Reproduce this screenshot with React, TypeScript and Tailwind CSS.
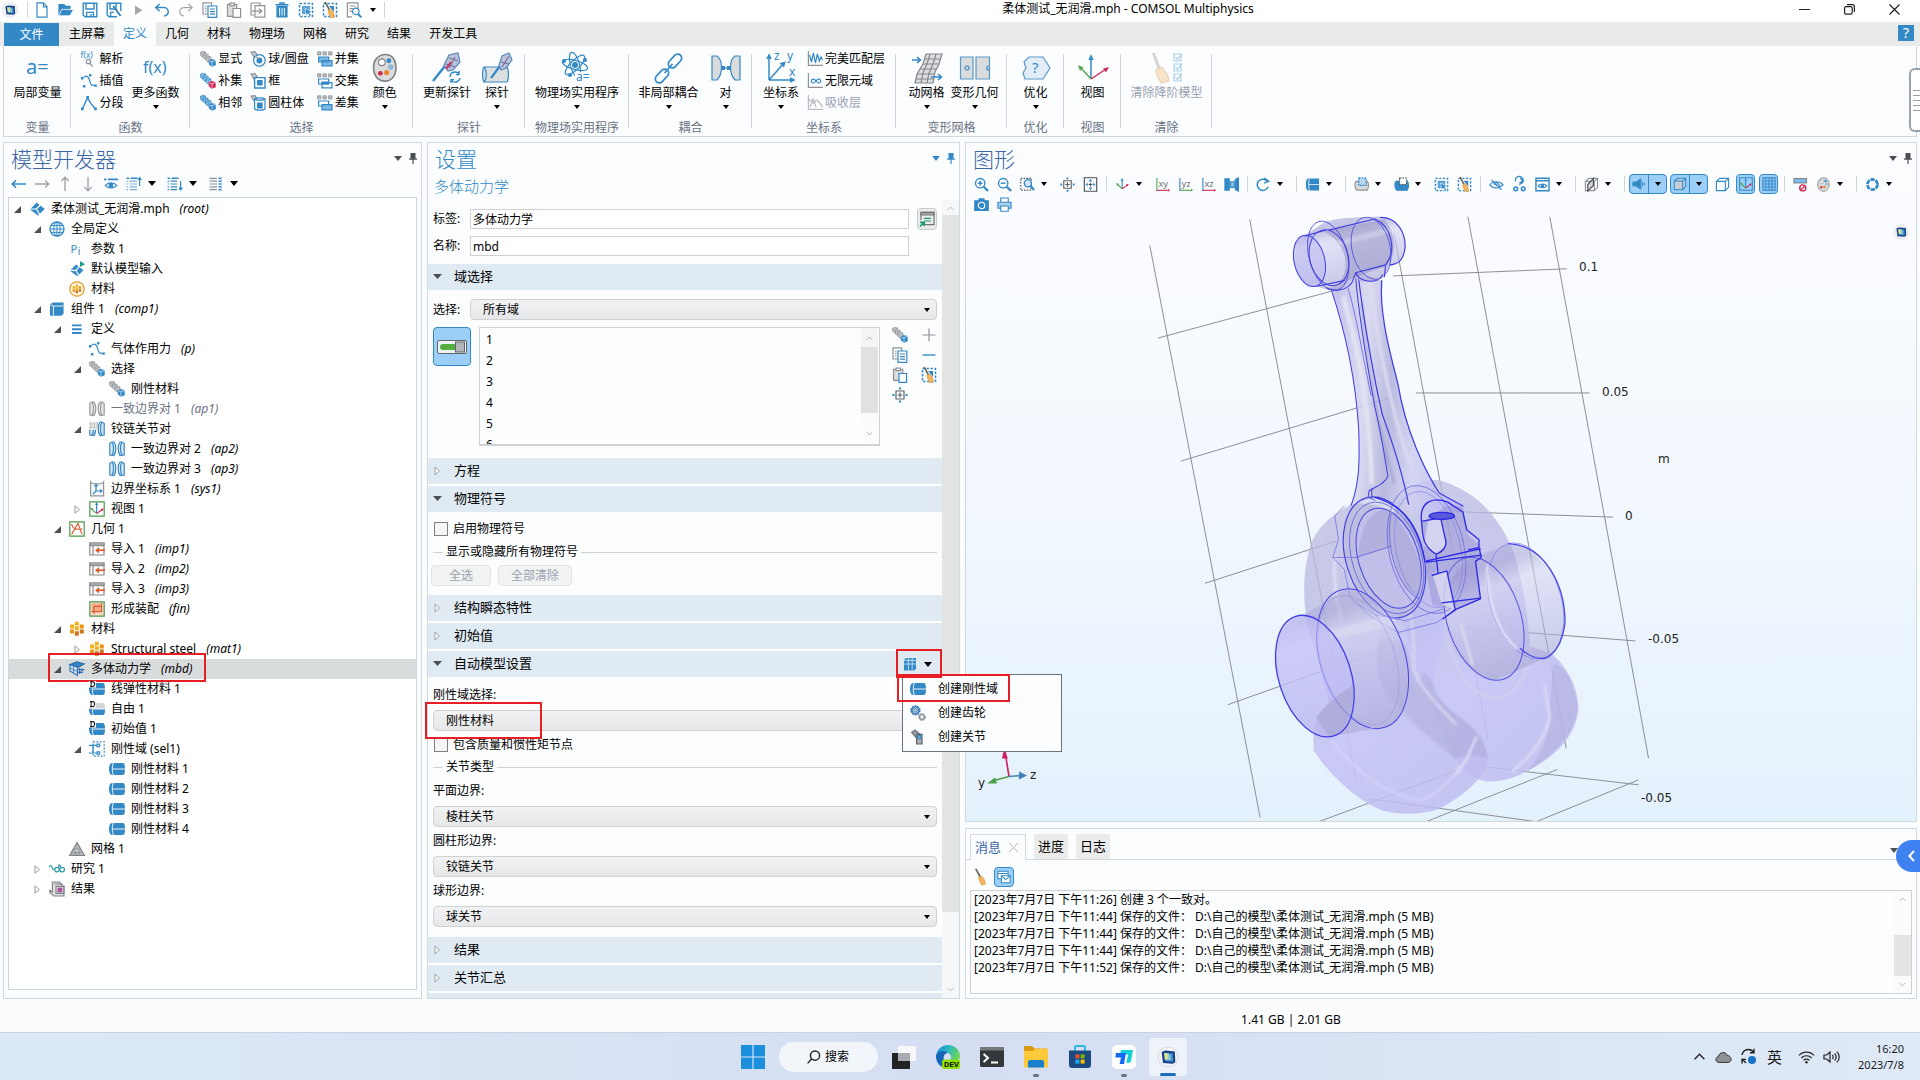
import React from "react";

const B = "#3389c6";
const G = "#8f9396";
const D = "#4b4f52";

function Svg({ s = 16, v = 16, children }: { s?: number; v?: number; children: React.ReactNode }) {
  return (
    <svg width={s} height={s} viewBox={`0 0 ${v} ${v}`} fill="none" stroke={B} strokeWidth="1.2" className="block shrink-0 overflow-visible" aria-hidden="true">
      {children}
    </svg>
  );
}

function Broom({ x = 0, y = 0, k = 1 }: { x?: number; y?: number; k?: number }) {
  return (
    <g transform={`translate(${x} ${y}) scale(${k})`} stroke="none">
      <path d="M1 0 L2.6 -0.4 L7 7.5 L5.4 8.4 Z" fill="#6d665c" />
      <path d="M4.6 8.6 L7.6 7 C10 9 11.4 12 11.4 15.6 L7.4 16 C6.4 13.6 5 12 4.6 8.6 Z" fill="#f3b45e" stroke="#d08f35" strokeWidth=".5" />
    </g>
  );
}

function Cubes({ last = B, all = "#c9cccf", edge = G }: { last?: string; all?: string; edge?: string }) {
  const cube = (x: number, y: number, f: string, e: string, k: number) => (
    <g transform={`translate(${x} ${y}) scale(${k})`}>
      <path d="M0 1.4 L2 0 L6 .6 L6.4 5.4 L3 6.6 L0.4 5 Z" fill={f} stroke={e} strokeWidth=".9" />
      <path d="M0 1.4 L3 2.2 L6 .6 M3 2.2 V6.6" stroke={e} strokeWidth=".7" />
    </g>
  );
  return (
    <>
      {cube(0.4, 0.4, all, edge, 0.85)}
      {cube(3, 2.8, all, edge, 0.85)}
      {cube(5.8, 5.4, all, edge, 0.85)}
      {cube(9, 8.6, last, last, 1)}
      <path d="M9.4 10.2 L12 10.8 L15 9.4 M12 10.8 V15" stroke="#fff" strokeWidth=".6" />
    </>
  );
}

const Cyl = ({ top = B }: { top?: string }) => (
  <g stroke="none">
    <path d="M3 2 H14 C15.5 2 16 5 16 8 C16 11 15.5 14 14 14 H3 C1 14 0 11 0 8 C0 5 1 2 3 2 Z" fill={top} />
    {top !== B && <path d="M0 8 H16 C16 11 15.5 14 14 14 H3 C1 14 0 11 0 8 Z" fill={B} />}
    <path d="M4.5 2 C2.9 4 2.9 12 4.5 14 M4 8 H16" stroke="#fff" strokeWidth=".9" fill="none" />
  </g>
);

const Dtag = ({ top = B }: { top?: string }) => (
  <>
    <Cyl top={top} />
    <path d="M0 0 H7 V6.6 H0 Z" fill="#fff" stroke="none" />
    <path d="M1 .6 H3.4 C6.4 .6 6.4 5.6 3.4 5.6 H1 M2.1 .6 V5.6" stroke="#222" strokeWidth="1.1" />
  </>
);

const Pair = ({ c = B, f = "#dfe7ee" }: { c?: string; f?: string }) => (
  <>
    <path d="M.8 2.5 L3 1 H5 C7.4 4 7.4 11 5 14.5 L.8 14 Z" fill={f} stroke={c} />
    <path d="M15.2 2.5 L13 1 H11 C8.6 4 8.6 11 11 14.5 L15.2 14 Z" fill={f} stroke={c} />
    <path d="M3 1 C5 4 5 11 3 14.5 M13 1 C11 4 11 11 13 14.5" stroke={c} />
  </>
);

const Bricks = ({ ring = false }: { ring?: boolean }) => (
  <g stroke="none" transform={ring ? "translate(3 3) scale(.62)" : undefined}>
    <path d="M5.8 .8 h4 v3.6 h-4z M1 3.6 h4v4h-4z M5.8 5.2h4v4h-4z" fill="#f3b21f" />
    <path d="M10.8 3.6h4v4h-4z M1 8.6h4v4h-4z" fill="#e8951a" />
    <path d="M10.8 8.6h4v4h-4z M5.8 10.2h4v4.6h-4z" fill="#c9771a" />
  </g>
);

const Import = () => (
  <>
    <path d="M.8 2 H15 V14 H.8 Z M.8 4.6 H15 M4 4.6 V14" stroke="#8a8a8a" />
    <path d="M0.8 2H15V4.2H.8Z" fill="#c4c6c8" stroke="#8a8a8a" />
    <path d="M16 9.2 H8" stroke="#d95f30" strokeWidth="1.8" />
    <path d="M10 6 L6 9.2 L10 12.6 Z" fill="#d95f30" stroke="none" />
  </>
);

const Diamond = () => (
  <>
    <path d="M7.6 1.6 L15.8 8 L9 14.4 L1 8.4 Z" fill={B} stroke="none" />
    <path d="M.5 8 L7.4 8 L11.2 4 M7.4 8 L10.6 13.4" stroke="#fff" strokeWidth="1.2" />
  </>
);

const Paste = () => (
  <>
    <path d="M1.5 2.4 H10.8 V13.4 H1.5Z" fill="#dcdedf" stroke={G} />
    <path d="M4 3.6 V1.2 H8.4 V3.6Z" fill="#fff" stroke={G} />
    <path d="M7 6.5 H14.6 V15.3 H7Z" fill="#fff" />
  </>
);

const Copy = () => (
  <>
    <path d="M1 .8 H9.6 V12 H1Z M3 4h1.5 M3 6.4h1.5 M3 8.8h1.5" stroke={G} />
    <path d="M6 4 H14.8 V15.3 H6Z" fill="#fff" />
    <path d="M8 7h5M8 9.6h5M8 12.2h5" />
  </>
);

const ClearSel = () => (
  <>
    <path d="M1.5 1.5H14.5V14.5H1.5Z" strokeDasharray="2.4 1.6" strokeWidth="1.5" />
    <path d="M7 4H12V10Z" fill={B} stroke="none" />
    <Broom x={1.4} y={0.2} k={0.97} />
  </>
);

const SelBox = () => (
  <>
    <path d="M1.5 1.5H14.5V14.5H1.5Z" strokeDasharray="2.4 1.6" strokeWidth="1.5" />
    <path d="M4 4H12V12H4Z" fill="#5aa3d6" stroke="none" />
    <path d="M7 6.4 L14 9.6 L11.4 10.6 L13.6 14 L12 15 L10 11.6 L8.2 13.4 Z" fill={B} stroke="#fff" strokeWidth=".6" />
  </>
);

const Palette = () => (
  <>
    <path d="M8.8 .8 C4 .6 1.4 4.6 2 9 C2.4 13 5 15.4 8.6 15.2 C12.4 15 14.4 11 14 7 C13.6 3 11.6 1 8.8 .8 Z" fill="#dcdcdc" stroke="#808488" strokeWidth=".9" />
    <g stroke="none">
      <circle cx="6.4" cy="5" r="1.8" fill="#fff" stroke="#808488" strokeWidth=".6" />
      <circle cx="10.2" cy="4.2" r="1.3" fill={B} />
      <circle cx="11.2" cy="7.6" r="1.5" fill="#8fb7d8" />
      <circle cx="9" cy="10.6" r="1.4" fill="#e8862e" />
      <circle cx="5.6" cy="11" r="1.3" fill="#d0314a" />
    </g>
  </>
);

const Triad = ({ frame = "" }: { frame?: string }) => (
  <>
    {frame && <path d="M.8 .8H15.2V15.2H.8Z" stroke={frame} fill={frame === B ? "none" : "#fff"} />}
    <path d="M7.6 12.6V2.6" stroke={B} />
    <path d="M7.6 12.6L2.4 7.6" stroke="#56a550" />
    <path d="M7.6 12.6L13.4 8.4" stroke="#cf2d5c" />
    <path d="M7.6 1L9.2 4H6Z" fill={B} stroke="none" />
    <path d="M1.2 6.4L4.4 7.4L2.4 9.6Z" fill="#56a550" stroke="none" />
    <path d="M14.8 7.2L13.4 10.2L11.6 8Z" fill="#cf2d5c" stroke="none" />
  </>
);

const Mag = ({ children }: { children?: React.ReactNode }) => (
  <>
    <circle cx="6.6" cy="6.6" r="5" strokeWidth="1.5" />
    <path d="M10.4 10.4L15 15" strokeWidth="2.4" />
    {children}
  </>
);

const WideBox = ({ fill = "none" }: { fill?: string }) => (
  <path d="M1.5 4.6L5 1.5H14.5V11L11 14.5H1.5Z M1.5 4.6H11V14.5 M11 4.6L14.5 1.5" fill={fill} />
);

const AxesText = ({ t, a, b }: { t: string; a: string; b: string }) => (
  <>
    <path d="M2 1V14.6" stroke={a} />
    <path d="M1.5 14.2H15" stroke={b} />
    <path d="M14 12.6L16 14.2L14 15.8Z" fill={b} stroke="none" />
    <text x="3.6" y="10.6" fontSize="10" fill="#707478" stroke="none" fontFamily="Noto Sans">{t}</text>
  </>
);

const Comsol = () => (
  <>
    <ellipse cx="8" cy="8" rx="7.2" ry="7.2" fill="#f2f3f6" stroke="#d5d8de" strokeWidth=".7" />
    <path d="M3.4 4.4 L6 3.4 L12.8 4 L13.2 11.6 L11.6 12.8 L4.4 12.2 Z" fill="#173f86" stroke="none" />
    <path d="M5 5 L11.4 5.4 L11.8 11.4 L5.8 11 Z" fill="#3d8fd6" stroke="none" />
    <path d="M5.2 5.2 L8.6 5.4 L8.8 9.8 L5.8 10 Z" fill="#e6e68a" stroke="none" />
    <path d="M7.4 6.4 L9.8 6.6 L10 10.2 L7.8 10 Z" fill="#8ec9c9" stroke="none" />
  </>
);

const ic: Record<string, React.ReactNode> = {
  comsol: <Comsol />,
  newf: <path d="M3 .8H9.6L13 4.4V15.2H3Z M9.4 1V4.8H13" />,
  open: <><path d="M1 13.6V2.6H6L7.6 4.4H12V7" fill={B} /><path d="M3.6 7.4H15.6L12 13.8H.8Z" fill={B} stroke="#fff" strokeWidth=".8" /></>,
  save: <path d="M1.2 1.2H14.8V14.8H3L1.2 13Z M4 1.2V7H12V1.2 M4.6 14.6V10.4H11.4V14.6 M9 12v2" strokeWidth="1.4" />,
  saveas: <><path d="M11 14.8H3L1.2 13V1.2H14.8V9 M4 1.2V7H10V1.2 M4.6 14.6V10.4H8" strokeWidth="1.4" /><path d="M6.4 4.6L13.8 14.6L15.4 13.4L8.2 3.6Z" fill={B} stroke="none" /></>,
  play: <path d="M5 3.6L12.4 8.2L5 13Z" fill="#a4a8aa" stroke="none" />,
  undo: <><path d="M2.6 5.6H10C13 5.6 14.6 8 14.2 10.4C13.8 12.6 12.4 13.8 10 14" strokeWidth="1.5" /><path d="M5.6 2L1.8 5.6L5.6 9.2" strokeWidth="1.5" /></>,
  redo: <g stroke="#a4a8aa"><path d="M13.4 5.6H6C3 5.6 1.4 8 1.8 10.4C2.2 12.6 3.6 13.8 6 14" /><path d="M10.4 2L14.2 5.6L10.4 9.2" /></g>,
  copy: <Copy />,
  paste: <Paste />,
  pasteG: <><path d="M1.5 2.4 H10.8 V14.4 H1.5Z" fill="#dcdedf" stroke={G} /><path d="M4 3.6 V1.2 H8.4 V3.6Z M7 6.5 H14.6 V15.3 H7Z" fill="#fff" stroke={G} /></>,
  dup: <g stroke={G}><path d="M1 1H10V4 M1 1V13H4" /><path d="M5 3.6H14.8V15.2H5Z" fill="#fff" /><path d="M1.6 9.2H11.6M9 6.8L11.8 9.2L9 11.8" /></g>,
  trash: <><path d="M3 4.4H13V15H3Z" fill={B} /><path d="M5.6 6V13.6M8 6V13.6M10.4 6V13.6" stroke="#fff" strokeWidth=".9" /><path d="M1.6 2.8H14.4M6 2.6V1H10V2.6" strokeWidth="1.5" /></>,
  selbox: <SelBox />,
  clearsel: <ClearSel />,
  find: <><path d="M12 6V.8H1.4V14.8H6M3.6 4h6M3.6 6.6h4M3.6 9.2h2.6" stroke={G} /><circle cx="9.8" cy="9.4" r="3.2" /><path d="M12 12L15.4 15.4" strokeWidth="2" /></>,
  // ribbon small
  analytic: <><text x="-.5" y="7" fontSize="8.4" fill={B} stroke="none" fontFamily="Noto Sans">f(x)</text><circle cx="7.4" cy="10.6" r="2.2" stroke={G} /><path d="M9 12.4L11.6 15.6" stroke={G} /></>,
  interp: <><path d="M2.4 4.6C6 1 8 4.6 9 8.6C9.8 12 11 13 14 12" /><path d="M0 4h2.4v2.4H0zM8 1h2.4v2.4H8zM2 12h2.4v2.4H2zM13.4 11.4h2.4v2.4h-2.4z" fill={B} stroke="none" /></>,
  piecewise: <><path d="M1.4 14L6.4 3L10 8.6L14.4 14" strokeWidth="1.4" /><path d="M0 12.6h2.6v2.6H0zM5.4 1h2.6v2.6H5.4zM13.2 12.6h2.6v2.6h-2.6z" fill={B} stroke="none" /></>,
  cubes: <Cubes />,
  cubesRed: <Cubes all="#9fcbea" edge={B} last="#d02a55" />,
  cubesBlue: <Cubes all="#8fc2e6" edge={B} />,
  ball: <><path d="M1 1L5 .6L8 5L4 6Z" fill="#c9cccf" stroke={G} /><circle cx="9.4" cy="9.4" r="5.8" fill="#fff" /><circle cx="9.4" cy="9.4" r="2.4" fill={B} /><path d="M5.4 5.4L9 8" stroke={G} /></>,
  frame: <><path d="M1 1L5 .6L8 5L4 6Z" fill="#c9cccf" stroke={G} /><path d="M4.6 4.6H15V15H4.6Z" fill="#fff" strokeWidth="1.4" /><path d="M7.6 7.6H12V12H7.6Z" fill={B} /></>,
  cyls: <><path d="M1 1L5 .6L8 5L4 6Z" fill="#c9cccf" stroke={G} /><path d="M4.6 4C6 2.6 13.6 2.6 15 4V14C13.6 15.6 6 15.6 4.6 14Z" fill="#fff" /><path d="M4.6 4C6 5.6 13.6 5.6 15 4" /><path d="M7.6 8H12V13H7.6Z" fill={B} /></>,
  union: <><path d="M.5 .8H4V4H.5ZM6 .8H9.5V4H6ZM11.5 .8H15V4H11.5Z" fill="#b7babd" stroke={G} strokeWidth=".7" /><path d="M1.6 6H11.6V11H1.6Z M5 9.6H15V14.8H5Z" fill="#7db9e4" /></>,
  inter: <><path d="M.5 .8H4V4H.5ZM6 .8H9.5V4H6ZM11.5 .8H15V4H11.5Z" fill="#b7babd" stroke={G} strokeWidth=".7" /><path d="M1.6 6H11.6V11H1.6Z M5 9.6H15V14.8H5Z" fill="#fff" /><path d="M5 9.2H11.6V11H5Z" fill={B} /></>,
  diff: <><path d="M.5 .8H4V4H.5ZM6 .8H9.5V4H6ZM11.5 .8H15V4H11.5Z" fill="#b7babd" stroke={G} strokeWidth=".7" /><path d="M1.6 6H11.6V11H1.6Z" fill="#fff" /><path d="M5 9.6H15V14.8H5Z" fill="#7db9e4" /></>,
  pml: <><path d="M1.4 0V14.4H16" stroke={G} /><path d="M2.6 4L4.4 11L6.4 2L8.4 12L10.4 3L12.4 10L14 6L15.6 9" /></>,
  inf: <><path d="M1.4 0V14.4H16" stroke={G} /><path d="M4.4 8C4.4 5.4 7.4 5.8 9 8C10.6 10.2 13.6 10.6 13.6 8C13.6 5.4 10.6 5.8 9 8C7.4 10.2 4.4 10.6 4.4 8Z" /></>,
  absorb: <g stroke="#b8bbbd"><path d="M1.4 0V14.4H16M2 6C4 1 6 12 8 7S12 8 15.6 12M3 12L6 4L9 12" /></g>,
  // tree
  diamond: <Diamond />,
  globe: <g stroke={B} strokeWidth="1"><circle cx="8" cy="8" r="7" strokeWidth="1.3" /><ellipse cx="8" cy="8" rx="3.2" ry="7" /><path d="M8 1V15M1 8H15M2 4.6H14M2 11.4H14" /></g>,
  pi: <text x="1.6" y="12" fontSize="11" fill={B} stroke="none" fontFamily="Noto Sans">P<tspan dx=".6" dy="1.6" fontSize="10">i</tspan></text>,
  modelin: <><g transform="translate(0 2) scale(.92)"><Diamond /></g><path d="M11 0L16 3.2L11 6Z" fill="#1d9a8a" stroke="none" /></>,
  matring: <><circle cx="8" cy="8" r="7.2" stroke="#e8951a" fill="#fff8ea" /><Bricks ring /></>,
  comp: <><path d="M1 3.6L4 1.4H14.6V12.6L12.4 14.8H1Z" fill={B} stroke="none" /><path d="M1.2 3.8L4.4 5H14.4 M4.4 5V14.6" stroke="#fff" strokeWidth=".9" /></>,
  defs: <path d="M3 4.4H12.6M3 8.2H12.6M3 12H12.6" strokeWidth="1.9" />,
  pairG: <Pair c="#9a9a9a" f="#e8e8e8" />,
  pair: <Pair />,
  pairs: <><Pair /><path d="M0 0H9V8.6H0Z" fill="#fff" stroke="none" /><path d="M2 1v7M5 1v7M8 1v7M0 3H9M0 6H9" stroke={G} strokeWidth=".9" strokeDasharray="1.6 1" /></>,
  sys: <><path d="M1.6 1C3 3.4 13 3.4 14.6 1V14.8H1.6Z" stroke={G} fill="#f6f8fa" /><path d="M7 3.6V10M7 10H12.6M7 10L4 13M11 8.4L13 10L11 11.6M5.4 5.4L7 3.4L8.6 5.4" /></>,
  view: <Triad frame="#4b9b4b" />,
  geom: <><path d="M.8 .8H15.2V15.2H.8Z" stroke="#4b9b4b" fill="#fff" /><path d="M2.6 13.4L9 2.4L13 13.4M2.6 3C4 10 10 8 13.4 8" stroke="#e0603a" /></>,
  imp: <Import />,
  fin: <><path d="M.8 .8H15.2V15.2H.8Z" stroke="#4b9b4b" fill="#f7d9c8" /><path d="M2.6 2.6H12.6V10.6H2.6Z" fill="#f2a98c" stroke="none" /><path d="M5 5.4H12.6V2 M2.6 10.6H12.6V5.4 M5 5.4V13" stroke="#d95f30" /></>,
  bricks: <Bricks />,
  mbd: <><path d="M1 3.6L8 .8L15 3L9.6 6Z" fill={B} stroke="#2b6aa6" /><path d="M1 3.6V10L8.4 14.4V6.2Z" fill="#d7e4f2" stroke="#3a74b4" /><path d="M9 8.6H15.6M9 11.4H14M10.6 7V13M13 7.6V10.6" stroke="#3a74b4" strokeWidth="1.3" /><path d="M4.6 5V12.4M1 7L8.4 10.4" stroke="#3a74b4" strokeWidth=".8" /></>,
  dom: <Dtag />,
  free: <Dtag top="#d3d6d8" />,
  selgrp: <><path d="M4 .8H15.2V15.2H4Z" strokeDasharray="1.8 1.6" /><path d="M0 4.4H8M4 4.4V12H8M0 12H4" /><path d="M8 3.2h2.6v2.4H8zM8 10.8h2.6v2.4H8z" fill="#fff" /></>,
  cyl: <Cyl />,
  mesh: <><path d="M8 1.6L15.4 14.4H.6Z" fill="#c6c8ca" stroke="#808486" /><path d="M4.4 8H11.6L8 14.4Z M8 1.6V8M2.6 11.4H13.4M6 11.4L4.4 14.4M10 11.4L11.6 14.4" stroke="#808486" strokeWidth=".7" /></>,
  study: <><path d="M0 6C1.4 3.6 2.6 4.6 3.6 7.4C4.2 8.8 5 9 5.6 8" stroke="#2d9aa8" /><circle cx="8" cy="8.6" r="2.3" stroke="#2d9aa8" /><circle cx="13.2" cy="8.6" r="2.3" stroke="#2d9aa8" /><path d="M10 7C9 3 11 3 11.6 6" stroke="#2d9aa8" /></>,
  results: <><path d="M3.4 1H11V3H13V5H15V15H5L.8 11.4V9.4L3.4 11Z" fill="#dfe0e1" stroke="#808486" /><path d="M5.4 3H13M7 5.4H14.8V12.4H7Z" fill="#f4f4f4" stroke="#808486" /><path d="M8.4 6.6H13.4V11.4H8.4Z" fill="#b052a0" stroke="none" /></>,
  // tree toolbar
  back: <path d="M1 8H15M5 4.4L1.2 8L5 11.6" strokeWidth="1.5" />,
  fwd: <path d="M1 8H15M11 4.4L14.8 8L11 11.6" stroke="#9c9fa2" strokeWidth="1.3" />,
  up: <path d="M8 15V1M4.4 5L8 1.2L11.6 5" stroke="#9c9fa2" strokeWidth="1.3" />,
  down: <path d="M8 1V15M4.4 11L8 14.8L11.6 11" stroke="#9c9fa2" strokeWidth="1.3" />,
  eye: <><path d="M1 3.4H3.4M5 3.4H15" strokeWidth="1.8" /><path d="M2.4 9.4C5 6 11 6 13.8 9.4C11 12.8 5 12.8 2.4 9.4Z" /><circle cx="8" cy="9.2" r="1.8" fill={B} /></>,
  listup: <><path d="M.6 2.2H3M4.6 2.2H11.6" strokeWidth="1.6" /><path d="M.6 5.2H2M3.6 5.2H11M.6 8H2M3.6 8H11M.6 10.8H2M3.6 10.8H11M.6 13.6H2M3.6 13.6H11" stroke="#7fb1d8" /><path d="M13.6 10V1.6M12 4L13.6 1.6L15.4 4" /></>,
  listdn: <><path d="M.6 2.2H3M4.6 2.2H11.6" strokeWidth="1.6" /><path d="M.6 5.2H2M3.6 5.2H10M.6 8H2M3.6 8H10M.6 10.8H2M3.6 10.8H10M.6 13.6H2M3.6 13.6H10" /><path d="M13.6 5V14M12 11.6L13.6 14L15.4 11.6" /></>,
  listcol: <><path d="M1.6 2.4H9M1.6 5.2H9M1.6 8H9M1.6 10.8H9M1.6 13.6H9" stroke={G} /><path d="M10.6 2.4H13.6M10.6 5.2H13.6M10.6 8H13.6M10.6 10.8H13.6M10.6 13.6H13.6" strokeWidth="1.6" /></>,
  // settings
  labelbtn: <><path d="M2 1.4H15V13.6H6M2 1.4V9" stroke="#707478" /><path d="M2 1.4H15V4H2Z" fill="#a7abae" stroke="#707478" /><path d="M5 7.4H12M5 10H12" stroke="#1d9a72" /><path d="M1 11.4H5.2V15.2M1 15.4L5 11.6" stroke="#1d9a72" strokeWidth="1.6" /></>,
  plus: <path d="M8 1.6V14.4M1.6 8H14.4" stroke={G} />,
  minus: <path d="M1.6 8H14.4" strokeWidth="1.4" />,
  center: <><path d="M4 4H12V12H4Z" stroke="#606468" /><path d="M8 5.6V10.4M5.6 8H10.4" stroke="#606468" /><path d="M8 .4V2.4M8 13.6V15.6M.4 8H2.4M13.6 8H15.6" strokeWidth="2" /></>,
  gridcube: <><path d="M2 4L4 2H14V12.6L12.4 14.4H2Z" fill={B} stroke="none" /><path d="M2 8H14M6.4 2V14.4M10.2 2V14.4M2 4.4H14" stroke="#d7ebf8" strokeWidth=".8" /></>,
  gears: <><circle cx="5.4" cy="5.4" r="4.2" fill="#8fc2e6" stroke="#3a74a8" strokeWidth="1.8" strokeDasharray="1.9 .74" /><circle cx="5.4" cy="5.4" r="3.4" fill="#8fc2e6" stroke="#3a74a8" strokeWidth=".8" /><circle cx="5.4" cy="5.4" r="1.4" fill="#fff" stroke="#3a74a8" strokeWidth=".8" /><circle cx="12" cy="12" r="2.6" stroke="#84888c" strokeWidth="2.2" strokeDasharray="1.6 .45" /></>,
  joint: <><path d="M1.6 3.4L5 1L10 5.4L6.6 9Z" fill="#9a9da0" stroke="#707478" /><path d="M6.6 5.4H12V15H6.6Z" fill="#a9adb0" stroke="#606468" /><circle cx="9.2" cy="8.2" r="1.8" fill="#6aa5d2" /></>,
  // graphics toolbar
  zin: <Mag><path d="M6.6 4V9.2M4 6.6H9.2" strokeWidth="1.5" /></Mag>,
  zout: <Mag><path d="M4 6.6H9.2" strokeWidth="1.5" /></Mag>,
  zbox: <><path d="M.8 1.4H12V14H.8Z" stroke={D} strokeDasharray="1.6 1.4" /><circle cx="8.4" cy="6.6" r="3.8" fill="#d6e9f7" strokeWidth="1.5" /><path d="M11.4 9.6L15 14" strokeWidth="2.4" /></>,
  extents: <><path d="M1.4 .8H14.6V15.2H1.4Z" stroke={D} /><path d="M8 6V10M6 8H10" stroke={D} /><path d="M8 2L10 4.8H6ZM8 14L10 11.2H6ZM2.6 8L5 6V10ZM13.4 8L11 6V10Z" fill={B} stroke="none" /></>,
  triad: <Triad />,
  xy: <AxesText t="xy" a="#56a550" b="#cf2d5c" />,
  yz: <AxesText t="yz" a={B} b="#56a550" />,
  xz: <AxesText t="xz" a={B} b="#cf2d5c" />,
  clip: <><path d="M1 2H5.6V14H1Z" fill={B} /><path d="M7 5H11V11H7Z" fill="#8fc2e6" /><path d="M12 2.6L15.4 1V15L12 13.4Z" fill={B} /></>,
  rot: <><path d="M12.4 5A6 6 0 1 0 13 10.4" strokeWidth="1.6" /><path d="M9 1L13.6 4.6L8.6 6.6" strokeWidth="1.5" /></>,
  render: <><path d="M1 8C1 5 1 3 3 1.6H15V14.4H3C1 13 1 11 1 8Z" fill={B} stroke="none" /><path d="M5 1.6C3.4 4 3.4 12 5 14.4M4 8H15" stroke="#fff" strokeWidth=".8" /></>,
  selG: <><path d="M1 8C1 5.4 2 4.4 4 4.4H14C16 6 16 12 14 14H3C1.6 13 1 11 1 8Z" fill="#d6d8da" stroke={G} /><path d="M5 1H13V9H5Z" strokeDasharray="1.8 1.2" strokeWidth="1.4" fill="#b9d8ee" /></>,
  selB: <><path d="M1 8C1 5.4 2 4.4 4 4.4H14C16 6 16 12 14 14H3C1.6 13 1 11 1 8Z" fill={B} /><path d="M6 1H13.4V8H6Z" fill="#fff" stroke={D} strokeDasharray="1.8 1.2" /></>,
  hide: <path d="M1 8.4C4 4 11 4 15 8.4C11 12.6 4 12.6 1 8.4ZM5 7L11.4 11M7 5L12 9.4M2.6 3L13.4 13.6" />,
  reset: <><path d="M4 4.6A4 4 0 1 1 9.6 7L7.4 8M8.6 1L12 4.4L8 6" strokeWidth="1.4" /><circle cx="4" cy="12.6" r="2" strokeWidth="1.6" /><circle cx="12" cy="12.6" r="2" strokeWidth="1.6" /></>,
  viewwin: <><path d="M1 1.4H15V14.6H1Z M1 4H15" strokeWidth="1.5" /><path d="M3.4 9.4C5.6 6.8 10.4 6.8 12.6 9.4C10.4 12 5.6 12 3.4 9.4Z" /><circle cx="8" cy="9.4" r="1.3" fill={B} /></>,
  slice: <><path d="M1.5 4.6L5 1.5H14.5V11L11 14.5H1.5Z M1.5 4.6H11V14.5 M11 4.6L14.5 1.5" stroke={G} /><path d="M4 8L10 1.6V9L4 15Z" fill="#cfd5da" stroke={D} /></>,
  light: <><path d="M1 6H4.6L10 2.4V13.6L4.6 10H1Z" fill={B} /><path d="M12 5.4V10.6M14 6.6V9.4" /></>,
  boxT: <WideBox fill="#c3cdd6" />,
  boxO: <WideBox />,
  axesT: <Triad frame={B} />,
  gridT: <path d="M1 1H15V15H1ZM4.5 1V15M8 1V15M11.5 1V15M1 4.5H15M1 8H15M1 11.5H15" />,
  tagno: <><path d="M1 1.6H14.4V6.4H1Z" fill="#7db9e4" stroke="#808486" /><circle cx="10.4" cy="11.6" r="3.2" fill="#fff" stroke="#d02a55" strokeWidth="1.5" /><path d="M8.4 13.6L12.4 9.8" stroke="#d02a55" strokeWidth="1.5" /></>,
  palette: <Palette />,
  aperture: <circle cx="8" cy="8" r="5.4" strokeWidth="3" strokeDasharray="4.6 1.05" />,
  camera: <><path d="M.8 4H4.6L5.6 2H10.4L11.4 4H15.2V14.4H.8Z" fill={B} /><circle cx="8" cy="9" r="3.4" stroke="#fff" fill={B} /></>,
  print: <><path d="M4 5.6V1H12V5.6" fill="#fff" /><path d="M1 5.6H15V12H1Z" fill="#a9d0ee" /><path d="M4 9.6H12V15.2H4Z" fill="#fff" /></>,
  broom: <Broom x={2} y={0} />,
  msgs: <><path d="M1 1.4H12.6V10H1Z M1 4H12.6" fill="#fff" stroke={B} /><path d="M5 6.6H15V14.6H5Z" fill="#fff" /><path d="M5 6.6L10 11L15 6.6" /></>,
};

const Icon = ({ n, s = 16 }: { n: string; s?: number }) => <Svg s={s}>{ic[n]}</Svg>;

function Caret({ cls = "text-black", small }: { cls?: string; small?: boolean }) {
  return (
    <svg width={small ? 6 : 8} height={small ? 4 : 5} viewBox="0 0 8 5" preserveAspectRatio="none" className={`block shrink-0 ${cls}`} aria-hidden="true">
      <path d="M0 0H8L4 5Z" fill="currentColor" />
    </svg>
  );
}

/* ------------------------------ title bar ------------------------------ */

function TitleBar() {
  const tools = ["newf", "open", "save", "saveas", "play", "undo", "redo", "copy", "pasteG", "dup", "trash", "selbox", "clearsel", "find"];
  return (
    <header className="grid h-[22px] shrink-0 grid-cols-[1fr_auto_1fr] items-center bg-white">
      <div className="-mt-0.5 flex items-center">
        <div className="w-[27px] pl-0.5"><Icon n="comsol" /></div>
        <div className="h-4 w-px bg-gray-300" />
        <div className="ml-0.5 flex">
          {tools.map((t) => (
            <button key={t} aria-label={t} className="flex w-6 justify-center"><Icon n={t} /></button>
          ))}
        </div>
        <button aria-label="更多" className="ml-1 mr-2"><Caret small /></button>
        <div className="h-4 w-px bg-gray-300" />
      </div>
      <h1 className="-mt-1 whitespace-nowrap pl-[336px]">柔体测试_无润滑.mph - COMSOL Multiphysics</h1>
      <div className="-mt-1 flex items-center justify-end pr-[3px]">
        <button aria-label="最小化" className="flex w-[45px] justify-center"><svg width="11" height="11" stroke="#222"><path d="M0 5.5H11" /></svg></button>
        <button aria-label="还原" className="flex w-[45px] justify-center"><svg width="11" height="11" fill="none" stroke="#222" strokeWidth="1.2"><rect x=".6" y="2.6" width="7.6" height="7.6" rx="1.4" /><path d="M3 .6H8.4Q10.4 .6 10.4 2.6V8" /></svg></button>
        <button aria-label="关闭" className="flex w-[45px] justify-center"><svg width="11" height="11" stroke="#222" strokeWidth="1.2"><path d="M.5 .5L10.5 10.5M10.5 .5L.5 10.5" /></svg></button>
      </div>
    </header>
  );
}

/* ------------------------------- ribbon ------------------------------- */

const big: Record<string, React.ReactNode> = {
  local: <text x="4" y="22" fontSize="20" fill={B} stroke="none" fontFamily="Noto Sans">a=</text>,
  more: <text x="3" y="21" fontSize="16" fill={B} stroke="none" fontFamily="Noto Sans">f(x)</text>,
  color: <g transform="translate(1 1) scale(1.85)"><Palette /></g>,
  updprobe: <><path d="M2 29L14 14" strokeWidth="2.4" /><path d="M13 13L18 3L27 1L29 10L22 18L17 19Z" fill="#b9c4da" stroke="#5b86b6" /><path d="M18 16L24 5M15 12L24 15M18 6L27 9" stroke="#7a6c9c" /><path d="M15 17L20 10" stroke="#cf2d5c" strokeWidth="2" /><path d="M19 25A5 5 0 0 1 28 22M29 26A5 5 0 0 1 20 28M28 19V22.6H25M20 31V27.6H23" strokeWidth="1.4" /></>,
  probe: <><path d="M3 15C1 18 1 27 3 30H26C28 27 28 18 26 15Z" fill="#dcdee0" stroke={B} /><path d="M3 15C6 18 6 27 3 30" /><path d="M10 26L19 14" strokeWidth="2.2" /><path d="M18 13L21 4L28 1L31 8L25 16L20 18Z" fill="#b9c4da" stroke="#5b86b6" /><path d="M21 15L28 4M20 10L28 12" stroke="#7a6c9c" /></>,
  atom: <><ellipse cx="14" cy="13" rx="13" ry="4.6" transform="rotate(15 14 13)" /><ellipse cx="14" cy="13" rx="13" ry="4.6" transform="rotate(75 14 13)" /><ellipse cx="14" cy="13" rx="13" ry="4.6" transform="rotate(135 14 13)" /><circle cx="14" cy="13" r="2.4" fill={B} /><g fill={B}><circle cx="3" cy="9" r="1.4" /><circle cx="24" cy="8" r="1.4" /><circle cx="9" cy="23" r="1.4" /></g><path d="M14 20H34V32H14Z" fill="#fcfdff" stroke="none" /><text x="15" y="29" fontSize="12" fill={B} stroke="none" fontFamily="Noto Sans">a=</text></>,
  link: <g strokeWidth="1.7"><rect x="-4" y="-8" width="8" height="16" rx="4" transform="translate(22 9) rotate(42)" /><rect x="-4" y="-8" width="8" height="16" rx="4" transform="translate(9 24) rotate(42)" /><path d="M11.5 21L19.5 12" /></g>,
  pairb: <><path d="M2 4H7C13 8 13 22 7 28H2Z" fill="#d9dbdd" /><path d="M30 4H25C19 8 19 22 25 28H30Z" fill="#d9dbdd" /><path d="M11 14H15V18H11ZM17 14H21V18H17Z" fill={B} stroke="none" /><path d="M14 16H18" /></>,
  coord: <><path d="M4 28V4M4 28H28M4 28L19 11M2 7L4 3L6 7M25 26L29 28L25 30M15 12L19.6 10.4L18.4 15" strokeWidth="1.5" /><g fill={B} stroke="none" fontSize="12" fontFamily="Noto Sans"><text x="9" y="8">z</text><text x="22" y="8">y</text><text x="24" y="24">x</text></g></>,
  movmesh: <><path d="M15 2H31L28 12L24 20L22 31H4L6 22L12 12Z" fill="#dcdddf" stroke="#84888c" /><path d="M19 2L16 12L12 21L10 31M25 2L22 12L18 21L16 31M13 7H29.6M12 12H28M8.6 17H25M6 22H23.6M5 27H22.6" stroke="#84888c" /><path d="M1 8H9M6 5L9.4 8L6 11M20 25H30M27 22L30.4 25L27 28" strokeWidth="1.6" /></>,
  defgeo: <><path d="M1.5 5H14V27H1.5ZM17 5H30.5V27H17Z" fill="#d9dbdd" stroke="#5a97c6" /><circle cx="8" cy="16" r="2" /><path d="M30 14C27 14 27 18 30 18" /></>,
  opt: <><path d="M9 5H23L30 16L23 27H5L3 21L6 16L4 10Z" fill="#e2edf8" stroke="#5a97c6" /><text x="12" y="21" fontSize="15" fill={B} stroke="none" fontFamily="Noto Sans">?</text></>,
  view: <><path d="M14 27V6" stroke={B} strokeWidth="1.5" /><path d="M14 27L4 16" stroke="#56a550" strokeWidth="1.5" /><path d="M14 27L29 17" stroke="#cf2d5c" strokeWidth="1.5" /><path d="M14 2L16.6 8H11.4Z" fill={B} stroke="none" /><path d="M1 13L6.6 15.4L3 19Z" fill="#56a550" stroke="none" /><path d="M32 15L29 20.6L26 16.6Z" fill="#cf2d5c" stroke="none" /></>,
  clean: <g opacity=".55"><path d="M1 1L4 1L10 17L7 18Z" fill="#b7b2aa" stroke="none" /><path d="M5 18L11 15C15 20 18 24 18 29L10 31C8 27 5 24 5 18Z" fill="#f5cfa0" stroke="#dcae74" /><g stroke="#6aa9d4"><path d="M23 2H30V9H23ZM23 12H30V19H23ZM23 22H30V29H23Z" /><path d="M24.6 5L26.4 7.4L31 1.6M24.6 15L26.4 17.4L31 11.6M24.6 25L26.4 27.4L31 21.6" /></g></g>,
};

function Big({ n, label, caret, off, w }: { n: string; label: string; caret?: boolean; off?: boolean; w: string }) {
  return (
    <button disabled={off} className={`flex flex-col items-center ${w} ${off ? "text-gray-400" : ""}`}>
      <Svg s={32} v={32}>{big[n]}</Svg>
      <span className="whitespace-nowrap leading-[18px]">{label}</span>
      {caret && <span className="mt-[3px]"><Caret small /></span>}
    </button>
  );
}

function Small({ items, off }: { items: [string, string][]; off?: string }) {
  return (
    <div className="flex flex-col">
      {items.map(([n, t]) => (
        <button key={t} disabled={t === off} className={`flex h-[22px] items-center gap-0.5 whitespace-nowrap ${t === off ? "text-gray-400" : ""}`}>
          <Icon n={n} />
          <span>{t}</span>
        </button>
      ))}
    </div>
  );
}

function Group({ w, label, children, pt = "pt-1.5" }: { w: string; label: string; children: React.ReactNode; pt?: string }) {
  return (
    <section className={`relative flex shrink-0 flex-col ${w}`}>
      <div className={`flex h-[74px] justify-center ${pt}`}>{children}</div>
      <div className="text-center leading-4 text-gray-500">{label}</div>
      <span className="absolute bottom-2 right-0 top-2 w-px bg-gray-300" />
    </section>
  );
}

function Ribbon() {
  const tabs = ["主屏幕", "定义", "几何", "材料", "物理场", "网格", "研究", "结果", "开发工具"];
  return (
    <>
      <nav className="flex h-6 shrink-0 items-stretch bg-[#e9ebeb] pl-1 pr-1.5">
        <button className="mt-px mr-px w-[55px] bg-[#3389c6] text-white">文件</button>
        {tabs.map((t) => (
          <button key={t} className={t === "定义" ? "bg-[#fbfdff] px-[9px] text-[#3389c6]" : "px-[9px]"}>{t}</button>
        ))}
        <button aria-label="帮助" className="ml-auto mt-[3px] h-4 w-4 bg-[#3389c6] text-sm leading-4 text-white">?</button>
      </nav>
      <div className="relative mx-[3px] flex h-[91px] shrink-0 border border-t-0 border-[#cfd6da] bg-[#fbfdff]">
        <Group w="w-[67px]" label="变量"><Big n="local" label="局部变量" w="w-14" /></Group>
        <Group w="w-[119px]" label="函数" pt="pt-0.5">
          <div className="flex gap-2">
            <Small items={[["analytic", "解析"], ["interp", "插值"], ["piecewise", "分段"]]} />
            <div className="pt-1"><Big n="more" label="更多函数" caret w="w-12" /></div>
          </div>
        </Group>
        <Group w="w-[223px]" label="选择" pt="pt-0.5">
          <div className="flex gap-2">
            <Small items={[["cubes", "显式"], ["cubesRed", "补集"], ["cubesBlue", "相邻"]]} />
            <Small items={[["ball", "球/圆盘"], ["frame", "框"], ["cyls", "圆柱体"]]} />
            <Small items={[["union", "并集"], ["inter", "交集"], ["diff", "差集"]]} />
            <div className="pt-1"><Big n="color" label="颜色" caret w="w-9" /></div>
          </div>
        </Group>
        <Group w="w-[112px]" label="探针"><Big n="updprobe" label="更新探针" w="w-14" /><Big n="probe" label="探针" caret w="w-11" /></Group>
        <Group w="w-[104px]" label="物理场实用程序"><Big n="atom" label="物理场实用程序" caret w="w-[84px]" /></Group>
        <Group w="w-[123px]" label="耦合"><Big n="link" label="非局部耦合" caret w="w-[70px]" /><Big n="pairb" label="对" caret w="w-11" /></Group>
        <Group w="w-[144px]" label="坐标系" pt="pt-0.5">
          <div className="flex gap-2">
            <div className="pt-1"><Big n="coord" label="坐标系" caret w="w-9" /></div>
            <Small items={[["pml", "完美匹配层"], ["inf", "无限元域"], ["absorb", "吸收层"]]} off="吸收层" />
          </div>
        </Group>
        <Group w="w-[111px]" label="变形网格"><Big n="movmesh" label="动网格" caret w="w-[46px]" /><Big n="defgeo" label="变形几何" caret w="w-[50px]" /></Group>
        <Group w="w-[57px]" label="优化"><Big n="opt" label="优化" caret w="w-9" /></Group>
        <Group w="w-[57px]" label="视图"><Big n="view" label="视图" w="w-9" /></Group>
        <Group w="w-[91px]" label="清除"><Big n="clean" label="清除降阶模型" off w="w-[74px]" /></Group>
        <div className="absolute -right-[5px] top-[22px] flex h-16 w-3 flex-col justify-center gap-1 rounded-l-md border-2 border-r-0 border-gray-400 bg-white pl-0.5">
          {[0, 1, 2, 3, 4].map((i) => <span key={i} className="h-px bg-gray-400" />)}
        </div>
      </div>
    </>
  );
}

/* ----------------------------- model tree ----------------------------- */

type Node = { d: number; n: string; t: string; tag?: string; a?: "open" | "closed"; mark?: "sel" | "off" };
const tree: Node[] = [
  { d: 0, n: "diamond", t: "柔体测试_无润滑.mph", tag: "(root)", a: "open" },
  { d: 1, n: "globe", t: "全局定义", a: "open" },
  { d: 2, n: "pi", t: "参数 1" },
  { d: 2, n: "modelin", t: "默认模型输入" },
  { d: 2, n: "matring", t: "材料" },
  { d: 1, n: "comp", t: "组件 1", tag: "(comp1)", a: "open" },
  { d: 2, n: "defs", t: "定义", a: "open" },
  { d: 3, n: "interp", t: "气体作用力", tag: "(p)" },
  { d: 3, n: "cubes", t: "选择", a: "open" },
  { d: 4, n: "cubes", t: "刚性材料" },
  { d: 3, n: "pairG", t: "一致边界对 1", tag: "(ap1)", mark: "off" },
  { d: 3, n: "pairs", t: "铰链关节对", a: "open" },
  { d: 4, n: "pair", t: "一致边界对 2", tag: "(ap2)" },
  { d: 4, n: "pair", t: "一致边界对 3", tag: "(ap3)" },
  { d: 3, n: "sys", t: "边界坐标系 1", tag: "(sys1)" },
  { d: 3, n: "view", t: "视图 1", a: "closed" },
  { d: 2, n: "geom", t: "几何 1", a: "open" },
  { d: 3, n: "imp", t: "导入 1", tag: "(imp1)" },
  { d: 3, n: "imp", t: "导入 2", tag: "(imp2)" },
  { d: 3, n: "imp", t: "导入 3", tag: "(imp3)" },
  { d: 3, n: "fin", t: "形成装配", tag: "(fin)" },
  { d: 2, n: "bricks", t: "材料", a: "open" },
  { d: 3, n: "bricks", t: "Structural steel", tag: "(mat1)", a: "closed" },
  { d: 2, n: "mbd", t: "多体动力学", tag: "(mbd)", a: "open", mark: "sel" },
  { d: 3, n: "dom", t: "线弹性材料 1" },
  { d: 3, n: "free", t: "自由 1" },
  { d: 3, n: "dom", t: "初始值 1" },
  { d: 3, n: "selgrp", t: "刚性域 (sel1)", a: "open" },
  { d: 4, n: "cyl", t: "刚性材料 1" },
  { d: 4, n: "cyl", t: "刚性材料 2" },
  { d: 4, n: "cyl", t: "刚性材料 3" },
  { d: 4, n: "cyl", t: "刚性材料 4" },
  { d: 2, n: "mesh", t: "网格 1" },
  { d: 1, n: "study", t: "研究 1", a: "closed" },
  { d: 1, n: "results", t: "结果", a: "closed" },
];
const indent = ["pl-[5px]", "pl-[25px]", "pl-[45px]", "pl-[65px]", "pl-[85px]"];

function PanelTitle({ children, color, mark = "text-[#4b4f52]" }: { children: React.ReactNode; color: string; mark?: string }) {
  return (
    <div className="flex h-[35px] shrink-0 items-center pb-1 pl-[7px] pr-1">
      <h2 className={`text-[21px] leading-[30px] font-light ${color}`}>{children}</h2>
      <button aria-label="面板菜单" className="ml-auto mr-[7px]"><Caret cls={mark} /></button>
      <button aria-label="固定" className={mark}>
        <svg width="8" height="11" viewBox="0 0 8 11" fill="currentColor" className="block"><path d="M1.5 0H6.5V5.4H8V6.8H0V5.4H1.5ZM3.4 6.8H4.6V11H3.4Z" /></svg>
      </button>
    </div>
  );
}

function ModelTree() {
  return (
    <aside className="flex min-h-0 flex-col border border-[#cfd9de] bg-[#fbfdff]">
      <PanelTitle color="text-[#3a66a5]">模型开发器</PanelTitle>
      <div className="flex h-[11px] shrink-0 items-center pl-[7px]">
        {["back", "fwd", "up", "down", "eye"].map((n) => (
          <button key={n} aria-label={n} className="mr-[7px]"><Icon n={n} /></button>
        ))}
        {["listup", "listdn", "listcol"].map((n) => (
          <button key={n} aria-label={n} className="mr-[11px] flex items-center gap-1.5"><Icon n={n} /><Caret /></button>
        ))}
      </div>
      <ul className="mx-1 mb-2 mt-2 min-h-0 flex-1 border border-[#ccd5da] bg-white pt-px">
        {tree.map((r, i) => (
          <li key={i} className={`relative flex h-5 items-center whitespace-nowrap ${indent[r.d]} ${r.mark === "sel" ? "bg-[#d9dcdc]" : ""} ${r.mark === "off" ? "text-gray-500" : ""}`}>
            <span className="w-[15px]">
              {r.a === "open" && <svg width="7" height="7" className="block"><path d="M7 0V7H0Z" fill={D} /></svg>}
              {r.a === "closed" && <svg width="7" height="9" className="block" fill="none" stroke="#999"><path d="M1 .8L5.4 4.5L1 8.2Z" /></svg>}
            </span>
            <Icon n={r.n} />
            <span className="ml-1.5">{r.t}</span>
            {r.tag && <i className="ml-2.5">{r.tag}</i>}
            {r.mark === "sel" && <span className="absolute -top-1.5 left-[39px] h-[29px] w-[158px] border-2 border-[#e81e25]" />}
          </li>
        ))}
      </ul>
    </aside>
  );
}

/* ------------------------------ settings ------------------------------ */

function Head({ t, open, mt, children }: { t: string; open?: boolean; mt: string; children?: React.ReactNode }) {
  return (
    <div className={`relative flex h-[26px] shrink-0 items-center bg-[#dfeaf3] pl-[5px] ${mt}`}>
      <button className="flex items-center">
        <span className="w-[21px]">
          {open
            ? <svg width="9" height="5" className="block"><path d="M0 0H9L4.5 5Z" fill={D} /></svg>
            : <svg width="7" height="10" className="ml-px block" fill="#fff" stroke="#9aa3aa"><path d="M1 1L5.4 5L1 9Z" /></svg>}
        </span>
        <span className="text-[13px]">{t}</span>
      </button>
      {children}
    </div>
  );
}

function Drop({ id, value }: { id: string; value: string }) {
  return (
    <div className="relative flex h-[21px] flex-1 items-center">
      <select id={id} defaultValue={value} className="h-[21px] w-full appearance-none rounded-sm border border-[#cfd1d3] bg-linear-to-b from-[#f1f2f3] to-[#e6e7e8] pl-3">
        <option>{value}</option>
      </select>
      <span className="pointer-events-none absolute right-[7px]"><Caret small /></span>
    </div>
  );
}

function ScrollMark({ up }: { up?: boolean }) {
  return <svg width="7" height="5" className="block" fill="none" stroke="#b5b8ba"><path d={up ? "M.5 4.2L3.5 1L6.5 4.2" : "M.5 .8L3.5 4L6.5 .8"} /></svg>;
}

function Legend({ t, mt }: { t: string; mt: string }) {
  return (
    <div className={`mr-[5px] flex h-5 items-center gap-[3px] pl-[5px] ${mt}`}>
      <span className="h-px w-2.5 bg-[#cfd2d4]" />
      <span>{t}</span>
      <span className="h-px flex-1 bg-[#cfd2d4]" />
    </div>
  );
}

function Check({ id, t, mt }: { id: string; t: string; mt: string }) {
  return (
    <div className={`flex h-5 items-center gap-[5px] pl-1.5 ${mt}`}>
      <input id={id} type="checkbox" className="h-[14px] w-[14px] appearance-none border border-[#7d8184] bg-[#f5f5f5]" />
      <label htmlFor={id}>{t}</label>
    </div>
  );
}

function Labelled({ id, t, v, mt = "mt-1" }: { id: string; t: string; v: string; mt?: string }) {
  return (
    <div className={`px-[5px] ${mt}`}>
      <label htmlFor={id} className="block h-5 leading-5">{t}</label>
      <div className="mt-[5px] flex"><Drop id={id} value={v} /></div>
    </div>
  );
}

function ToolMenu() {
  return (
    <div className="absolute -right-[120px] top-[23px] z-20 flex h-[78px] w-[160px] flex-col justify-center border border-gray-500 bg-[#fbfdff]">
      {[["cyl", "创建刚性域"], ["gears", "创建齿轮"], ["joint", "创建关节"]].map(([n, t]) => (
        <button key={t} className="flex h-6 items-center gap-3 pl-[7px]"><Icon n={n} /><span>{t}</span></button>
      ))}
      <span className="absolute -left-[6px] -top-px h-7 w-[113px] border-2 border-[#e81e25]" />
    </div>
  );
}

function Settings() {
  return (
    <section className="relative z-10 flex min-h-0 flex-col border border-[#cfd9de] bg-[#fbfdff]">
      <PanelTitle color="text-[#3389c6]" mark="text-[#3389c6]">设置</PanelTitle>
      <h3 className="h-[22px] shrink-0 pl-1.5 text-[15px] leading-4 font-light text-[#3389c6]">多体动力学</h3>
      <div className="flex min-h-0 flex-1 overflow-y-clip">
        <div className="z-10 flex flex-1 flex-col pt-2 [&>*]:shrink-0">
          <div className="flex h-[22px] items-center pl-[5px] pr-[5px]">
            <label htmlFor="lab" className="w-[37px]">标签:</label>
            <input id="lab" defaultValue="多体动力学" className="h-5 min-w-0 flex-1 border border-[#cfd1d3] bg-white px-0.5" />
            <button aria-label="编辑标签" className="ml-2 flex h-[22px] w-5 items-center justify-center rounded-sm border border-[#c7c9cb] bg-[#ececec]"><Icon n="labelbtn" /></button>
          </div>
          <div className="mt-1.5 flex h-5 items-center pl-[5px] pr-[33px]">
            <label htmlFor="nam" className="w-[37px]">名称:</label>
            <input id="nam" defaultValue="mbd" className="h-5 min-w-0 flex-1 border border-[#cfd1d3] bg-white px-0.5" />
          </div>
          <Head t="域选择" open mt="mt-2" />
          <div className="mt-[9px] flex items-center px-[5px]">
            <label htmlFor="dom" className="w-[37px]">选择:</label>
            <Drop id="dom" value="所有域" />
          </div>
          <div className="mt-[7px] flex h-[119px] pl-[5px] pr-[5px]">
            <button aria-label="激活选择" className="flex h-[39px] w-[38px] items-center justify-center rounded-sm border border-[#3389c6] bg-[#9bcff7]">
              <svg width="30" height="14" className="block"><rect x=".5" y=".5" width="29" height="13" rx="1.5" fill="#eef2f4" stroke="#60666a" /><rect x="3" y="4" width="17" height="6" rx="3" fill="#54ad3f" /><rect x="18.5" y="2" width="9" height="10" fill="#b4b8ba" stroke="#60666a" /></svg>
            </button>
            <div className="ml-2 flex min-w-0 flex-1 overflow-hidden border border-b-2 border-[#cfd1d3] pr-px">
              <ul className="flex-1 pl-1.5 pt-px">
                {[1, 2, 3, 4, 5, 6].map((k) => <li key={k} className="h-[21px] leading-[21px]">{k}</li>)}
              </ul>
              <div className="flex w-[17px] flex-col items-center justify-between bg-linear-to-b from-[#f3f4f4] to-[#fbfdff] py-2">
                <ScrollMark up />
                <span className="mb-[18px] mt-1.5 w-full flex-1 bg-[#e0e1e3]" />
                <ScrollMark />
              </div>
            </div>
            <div className="ml-3 grid grid-cols-[29px_16px] auto-rows-[20px] content-start items-start">
              {["cubes", "plus", "copy", "minus", "paste", "clearsel", "center"].map((n) => (
                <button key={n} aria-label={n} className="justify-self-start"><Icon n={n} /></button>
              ))}
            </div>
          </div>
          <Head t="方程" mt="mt-3" />
          <Head t="物理符号" open mt="mt-0.5" />
          <Check id="sym" t="启用物理符号" mt="mt-[7px]" />
          <Legend t="显示或隐藏所有物理符号" mt="mt-[3px]" />
          <div className="mt-[3px] flex gap-[7px] pl-[3px] text-gray-400">
            <button disabled className="h-[21px] w-[60px] rounded-sm border border-[#e2e3e4] bg-[#f2f3f3]">全选</button>
            <button disabled className="h-[21px] w-[74px] rounded-sm border border-[#e2e3e4] bg-[#f2f3f3]">全部清除</button>
          </div>
          <Head t="结构瞬态特性" mt="mt-[9px]" />
          <Head t="初始值" mt="mt-0.5" />
          <Head t="自动模型设置" open mt="mt-0.5">
            <button aria-label="创建" className="ml-auto mr-2.5 flex items-center gap-1.5"><Icon n="gridcube" /><Caret /></button>
            <ToolMenu />
            <span className="absolute -top-0.5 right-0 z-20 h-[29px] w-[46px] border-2 border-[#e81e25]" />
          </Head>
          <div className="relative pt-2">
            <Labelled id="rigid" t="刚性域选择:" v="刚性材料" mt="mt-0" />
            <span className="absolute -left-[3px] top-[25px] z-10 h-[37px] w-[117px] border-2 border-[#e81e25]" />
          </div>
          <Check id="mass" t="包含质量和惯性矩节点" mt="mt-1" />
          <Legend t="关节类型" mt="mt-0.5" />
          <Labelled id="flat" t="平面边界:" v="棱柱关节" />
          <Labelled id="cylb" t="圆柱形边界:" v="铰链关节" />
          <Labelled id="sph" t="球形边界:" v="球关节" />
          <Head t="结果" mt="mt-2.5" />
          <Head t="关节汇总" mt="mt-0.5" />
          <div className="mt-0.5 h-[26px] bg-[#dfeaf3]" />
        </div>
        <div className="flex w-[17px] flex-col items-center bg-[#f6f7f8] py-1.5">
          <ScrollMark up />
          <span className="mb-[75px] mt-1 w-full flex-1 bg-[#e3e5e5]" />
          <ScrollMark />
        </div>
      </div>
    </section>
  );
}

/* ------------------------------ graphics ------------------------------ */

const Sep = () => <span className="flex w-[9px] justify-center"><span className="h-4 w-px bg-gray-300" /></span>;

function Toolbar() {
  const items = "zin zout zbox v center extents | triad v xy yz xz clip | rot v | render v | selG v selB v selbox clearsel | hide reset viewwin v | slice v | *light *boxT boxO #axesT #gridT | tagno palette v | aperture v".split(" ");
  return (
    <div className="shrink-0 pl-1">
      <div className="flex h-[22px] items-center">
        {items.map((k, i) => {
          if (k === "|") return <Sep key={i} />;
          if (k === "v") return <button key={i} aria-label="选项" className="w-[17px] pl-0.5"><Caret small /></button>;
          if (k[0] === "*")
            return (
              <span key={i} className="mr-[3px] flex h-5 w-[38px] items-center rounded-sm border border-[#3389c6] bg-[#9bcff7]">
                <button aria-label={k.slice(1)} className="flex h-full w-[19px] items-center justify-center border-r border-[#3389c6]"><Icon n={k.slice(1)} s={14} /></button>
                <button aria-label="选项" className="flex flex-1 justify-center"><Caret small /></button>
              </span>
            );
          if (k[0] === "#")
            return (
              <span key={i} className="flex w-[23px] justify-center">
                <button aria-label={k.slice(1)} className="flex h-5 w-[19px] items-center justify-center rounded-sm border border-[#3389c6] bg-[#9bcff7]"><Icon n={k.slice(1)} s={14} /></button>
              </span>
            );
          return <button key={i} aria-label={k} className="flex w-[23px] justify-center"><Icon n={k} s={15} /></button>;
        })}
      </div>
      <div className="flex h-[18px] items-center">
        {["camera", "print"].map((n) => <button key={n} aria-label={n} className="flex w-[23px] justify-center"><Icon n={n} s={15} /></button>)}
      </div>
    </div>
  );
}

function Model() {
  const e = (cx: number, cy: number, rx: number, ry: number, r = -19, p: React.SVGProps<SVGEllipseElement> = {}) => (
    <ellipse cx={cx} cy={cy} rx={rx} ry={ry} transform={`rotate(${r} ${cx} ${cy})`} {...p} />
  );
  return (
    <svg viewBox="966 216 950 603" className="block h-full w-full" fill="none" role="img" aria-label="几何模型">
      <defs>
        <linearGradient id="cylg" x1="0" y1="0" x2=".3" y2="1">
          <stop offset="0" stopColor="#bab8e8" stopOpacity=".7" /><stop offset=".25" stopColor="#a6a4d4" stopOpacity=".65" />
          <stop offset=".4" stopColor="#d9d8f2" stopOpacity=".7" /><stop offset=".7" stopColor="#bebce8" stopOpacity=".6" /><stop offset="1" stopColor="#a8a6d0" stopOpacity=".65" />
        </linearGradient>
        <linearGradient id="rod" x1="0" y1="0" x2="1" y2=".12">
          <stop offset="0" stopColor="#b9b7ea" /><stop offset=".3" stopColor="#d4d4ee" /><stop offset=".5" stopColor="#b0afda" /><stop offset=".7" stopColor="#cfcff0" /><stop offset="1" stopColor="#bcb9f4" />
        </linearGradient>
        <linearGradient id="web" x1="0" y1="0" x2=".6" y2="1">
          <stop offset="0" stopColor="#bdbce0" stopOpacity=".75" /><stop offset=".35" stopColor="#b9b8e2" stopOpacity=".75" /><stop offset=".65" stopColor="#c6c4f6" stopOpacity=".9" /><stop offset="1" stopColor="#bfbdf0" stopOpacity=".85" />
        </linearGradient>
        <clipPath id="top"><rect x="0" y="18" width="1568" height="1600" /></clipPath>
        <filter id="soft" x="-50%" y="-20%" width="200%" height="140%"><feGaussianBlur stdDeviation="3" /></filter>
      </defs>
      <g transform="translate(1130 210) scale(.38265 .3954)" clipPath="url(#top)" strokeWidth="2.6" strokeLinejoin="round" strokeLinecap="round">
        <g stroke="#85888d" strokeWidth="2.4">
          <path d="M52 92L340 1537M313 26L590 1440M690 60L935 1340M883 18L1140 1362M1097 18L1355 1387" />
          <path d="M74 325L525 207M134 636L685 475M197 945L540 838M257 1252L655 1115" />
          <path d="M688 168L1141 150M748 464H1200M845 764L1261 778M860 1057L1320 1091" />
          <path d="M497 1547L850 1420M777 1547L1115 1417M1065 1547L1328 1443M870 1403L1328 1455M625 1490L1052 1547" />
        </g>
        {/* rear web */}
        <path d="M808 685C900 710 960 770 1000 860C1030 950 1040 1030 1045 1105L1100 1122C1150 1160 1172 1220 1172 1262C1165 1330 1120 1370 1075 1400C1020 1432 980 1450 930 1446C880 1438 850 1400 820 1330L760 1200L700 1000L690 760C720 700 760 680 808 685Z" fill="url(#web)" />
        <path d="M880 770C950 830 990 920 1005 1020C1010 1100 990 1150 950 1190C880 1180 830 1110 822 1040L800 900Z" fill="#c9c7f0" opacity=".5" />
        <path d="M1105 1150C1150 1150 1165 1230 1170 1262C1160 1330 1100 1385 1040 1420C1090 1360 1100 1300 1097 1285Z" fill="#a5a3cf" opacity=".35" />
        <g filter="url(#soft)" fill="none">
          <path d="M830 1080C850 1180 900 1235 960 1235C1010 1228 1040 1180 1045 1110" stroke="#d0cff0" strokeWidth="7" />
          <path d="M1084 1205L1097 1285C1080 1350 1040 1390 1000 1420" stroke="#dddcf8" strokeWidth="6" />
        </g>
        {/* rear journal */}
        <path d="M905 878L990 845C1070 850 1137 950 1137 1040C1130 1090 1110 1125 1085 1135L955 1190C870 1180 820 1080 820 1020C825 940 860 890 905 878Z" fill="url(#cylg)" opacity=".85" />
        {e(1034, 990, 92, 152, -19, { stroke: "#7d7aec", strokeWidth: 1.6 })}
        <path d="M990 845C1085 850 1137 950 1137 1045C1130 1095 1110 1125 1085 1135C1060 1138 1040 1128 1020 1110" stroke="#4a48e6" strokeWidth="3.4" />
        {e(925, 1035, 96, 161, -19, { stroke: "#5351e0" })}
        <g filter="url(#soft)">
          <path d="M935 900C930 980 960 1070 1010 1110" stroke="#e6e5f8" strokeWidth="6" />
          <path d="M865 1050L895 1150" stroke="#dedded" strokeWidth="6" />
        </g>
        {/* front web */}
        <path d="M580 745C510 780 475 820 465 875C450 930 455 1000 462 1050L490 1130L520 1250C480 1280 478 1310 480 1368C520 1430 600 1500 660 1520C720 1535 790 1528 820 1510C890 1470 930 1430 936 1390C930 1350 915 1330 890 1305C850 1275 800 1240 793 1205C790 1160 822 1100 821 1060C815 980 800 900 760 830C720 770 650 735 580 745Z" fill="url(#web)" />
        <path d="M655 1080C640 1130 640 1170 665 1220L740 1300L850 1390C900 1370 925 1390 936 1390C930 1350 915 1330 890 1305C850 1275 800 1240 793 1205C790 1190 780 1180 770 1170L750 1200L720 1100Z" fill="#a19fca" opacity=".35" filter="url(#soft)" />
        <g filter="url(#soft)">
          <path d="M530 1345C580 1410 660 1480 760 1495C800 1480 860 1430 890 1370" stroke="#d3d1f6" strokeWidth="6" />
          <path d="M905 1335L880 1390L855 1425" stroke="#e0dff8" strokeWidth="6" />
          <path d="M715 970C740 1020 745 1100 740 1160C760 1210 790 1240 850 1300" stroke="#d5d4f0" strokeWidth="7" />
          <path d="M535 880C530 960 545 1000 552 1040" stroke="#dcdbf0" strokeWidth="9" />
        </g>
        {/* connecting rod shank */}
        <path d="M525 200C560 300 590 430 598 560C600 640 600 690 578 748L640 725L720 755C760 780 770 800 860 760L870 745L808 717C770 660 720 560 700 440C670 330 652 250 658 180L600 160Z" fill="url(#rod)" opacity=".85" />
        <g filter="url(#soft)">
          <path d="M558 225C590 330 625 480 632 690" stroke="#e2e2f2" strokeWidth="12" />
          <path d="M630 200C650 350 680 500 730 640" stroke="#dcdbf2" strokeWidth="8" />
          <path d="M606 240C620 400 650 560 690 690" stroke="#8b8abb" strokeWidth="6" opacity=".5" />
        </g>
        <g stroke="#3d3be2">
          <path d="M525 200C560 300 590 430 598 560C600 640 600 690 578 748" />
          <path d="M658 180C652 250 670 330 700 440C720 560 770 660 808 717L870 750" strokeWidth="3.2" />
          <path d="M590 175C600 290 625 420 640 500C655 560 665 620 674 675C660 700 640 700 625 712" />
          <path d="M596 165C612 290 640 440 660 520C690 600 715 680 728 745" strokeWidth="3.2" />
          <path d="M570 200C590 260 610 380 630 470" strokeWidth="1.6" />
          <path d="M625 712L622 728L640 735M632 706V730" />
        </g>
        {/* small end */}
        <path d="M455 67L505 34C540 20 600 20 640 18C690 10 720 50 720 95C715 130 700 140 680 142L665 165C640 185 600 190 585 170L545 206C510 206 500 195 480 194C440 190 425 140 427 115C430 85 440 70 455 67Z" fill="url(#cylg)" />
        <path d="M505 55L665 25C695 60 700 110 672 142L548 185C580 140 560 80 505 55Z" fill="#8f8ec0" opacity=".5" />
        <path d="M545 86L675 54" stroke="#d6d5ec" strokeWidth="13" opacity=".6" filter="url(#soft)" />
        <g stroke="#403ee2">
          {e(469, 130, 40, 66, -14, { fill: "#b6b4f0", fillOpacity: 0.5 })}
          {e(520, 122, 50, 72, -16, {})}
          {e(518, 117, 50, 90, -16, { strokeWidth: 2 })}
          {e(630, 98, 50, 80, -14, { strokeWidth: 1.8 })}
          <path d="M655 20C700 20 720 60 719 95C715 130 700 138 680 140M458 67L510 52M520 52L640 24C680 40 700 100 668 140L590 160M488 194L560 180M665 170L668 140" strokeWidth="3" />
          <path d="M660 165C650 190 600 185 590 160L580 185C560 210 530 205 515 200" />
        </g>
        {/* big end */}
        {e(665, 880, 100, 158, -19, { fill: "#a9a8d4", fillOpacity: 0.35, stroke: "#403ee2", strokeWidth: 3 })}
        {e(671, 881, 90, 146, -19, { stroke: "#6361e0", strokeWidth: 2 })}
        {e(676, 882, 78, 131, -19, { fill: "#c3c1ec", fillOpacity: 0.8, stroke: "#4947dd" })}
        <path d="M597 880L682 852C700 940 740 1000 760 960C770 900 740 830 680 760C640 750 600 790 597 880Z" fill="#9f9dce" opacity=".45" />
        <path d="M590 880L682 852M682 770C665 850 700 960 755 985" stroke="#5f5dd8" strokeWidth="2" />
        {e(775, 860, 98, 165, -14, { stroke: "#6a68e2", strokeWidth: 2 })}
        {e(780, 860, 84, 150, -14, { stroke: "#8482e8", strokeWidth: 1.6 })}
        <g stroke="#6a68e2" strokeWidth="1.8">
          <path d="M560 750L535 775L545 835L530 880L560 910L575 980L630 1030L700 1070L800 1045L850 1015" />
          <path d="M530 880L590 880M600 1000L640 1025L720 1040L820 1010" />
        </g>
        {/* bolt block */}
        <path d="M765 790L825 750L870 750L882 820L915 850L918 880L905 890L918 985L850 1012L790 1000L770 890Z" fill="#8a88cc" opacity=".4" />
        <path d="M780 785H815L825 850L800 870L768 850Z" fill="#dddcf4" opacity=".8" />
        <path d="M790 920L828 912L850 1012L815 1000Z" fill="#dfdef4" opacity=".75" />
        <g stroke="#2b29e6" strokeWidth="3.4">
          <path d="M762 790C755 740 790 725 830 740L870 765L880 810L912 835V855L885 860M912 855L918 880L903 890L916 985L850 1012L818 1035" />
          <path d="M762 790C765 830 765 850 800 872C830 860 828 840 822 825L812 780L765 788M770 890L915 858M775 892L918 874M790 925L828 914L850 1012M800 875L805 920M640 728C700 745 750 780 770 885" />
          <ellipse cx="815" cy="775" rx="33" ry="9" fill="#5a58d8" />
          <path d="M815 995L916 983" />
        </g>
        {/* front journal */}
        <path d="M450 1028L560 962C650 955 728 1080 728 1175C725 1260 700 1305 655 1312L520 1333C430 1320 380 1200 380 1130C385 1070 410 1035 450 1028Z" fill="url(#cylg)" opacity=".8" />
        <path d="M530 1075L680 1040" stroke="#e4e3f5" strokeWidth="26" opacity=".35" filter="url(#soft)" />
        {e(608, 1136, 110, 183, -19, { stroke: "#4644e4" })}
        {e(597, 1140, 96, 170, -19, { stroke: "#9a98dc", strokeWidth: 1.4 })}
        {e(483, 1180, 94, 159, -19, { fill: "#bfbcf8", fillOpacity: 0.6, stroke: "#403ee6", strokeWidth: 3.4 })}
        <path d="M487 1285C510 1250 560 1215 582 1205C590 1260 565 1325 520 1333" fill="#85839f" opacity=".25" />
      </g>
      <g fill="#222" fontSize="12" fontFamily="DejaVu Sans">
        <text x="1579" y="271">0.1</text><text x="1602" y="396">0.05</text><text x="1658" y="463">m</text><text x="1625" y="520">0</text>
        <text x="1648" y="643">-0.05</text><text x="1641" y="802">-0.05</text><text x="978" y="787">y</text><text x="1030" y="779">z</text>
      </g>
      <g strokeWidth="1.6">
        <path d="M1009 777L1005 752" stroke="#cf1f5c" /><path d="M1009 777L994 781" stroke="#4ba04b" /><path d="M1009 777L1022 776" stroke="#4181b8" />
        <path d="M1004 750L1008 759H1002Z" fill="#cf1f5c" /><path d="M987 784L995 778L997 784Z" fill="#4ba04b" /><path d="M1027 776L1019 772V780Z" fill="#4181b8" />
      </g>
    </svg>
  );
}

function Graphics() {
  return (
    <section className="relative flex min-h-0 flex-1 flex-col border border-[#cfd9de] bg-linear-to-b from-[#fcfdff] via-[#f3f8fe] to-[#e3f1fc]">
      <PanelTitle color="text-[#3a66a5]">图形</PanelTitle>
      <div className="-mt-[5px]"><Toolbar /></div>
      <div className="min-h-0 flex-1"><Model /></div>
      <div className="absolute right-[7px] top-[81px]"><Icon n="comsol" /></div>
    </section>
  );
}

function Messages() {
  const saved = "保存的文件： D:\\自己的模型\\柔体测试_无润滑.mph (5 MB)";
  const lines = [
    "[2023年7月7日 下午11:26] 创建 3 个一致对。",
    ...["11:44", "11:44", "11:44", "11:52"].map((t) => `[2023年7月7日 下午${t}] ${saved}`),
  ];
  return (
    <section className="relative mt-1.5 flex h-[171px] shrink-0 flex-col border border-[#cfd9de] bg-[#fbfdff]">
      <div className="flex h-[31px] shrink-0 items-end border-b border-[#cfd9de] pl-1 text-[13px]">
        <button className="-mb-px flex h-[26px] w-14 items-center gap-2 border border-b-0 border-[#cfd9de] bg-[#fbfdff] pl-1 text-[#3a66a5]">
          消息
          <svg width="9" height="9" stroke="#b5b8ba"><path d="M0 0L9 9M9 0L0 9" /></svg>
        </button>
        <button className="ml-2 h-[25px] w-[34px] bg-[#ebebec]">进度</button>
        <button className="ml-2 h-[25px] w-[34px] bg-[#ebebec]">日志</button>
      </div>
      <div className="flex h-[30px] shrink-0 items-center pl-1.5 pt-1">
        <button aria-label="清除消息" className="mr-1.5"><Icon n="broom" /></button>
        <button aria-label="显示消息" className="flex h-5 w-5 items-center justify-center rounded-sm border border-[#3389c6] bg-[#9bcff7]"><Icon n="msgs" s={14} /></button>
      </div>
      <div className="mx-1 mb-1 flex min-h-0 flex-1 border border-[#cfd1d3]">
        <div className="flex-1 overflow-hidden pl-[3px]">
          {lines.map((l, i) => <p key={i} className="whitespace-pre leading-[17px]">{l}</p>)}
        </div>
        <div className="flex w-[17px] flex-col items-center bg-[#fafbfc] py-1.5">
          <ScrollMark up />
          <span className="mb-1.5 mt-auto h-[41px] w-full bg-[#e3e5e5]" />
          <ScrollMark />
        </div>
      </div>
      <span className="absolute right-[18px] top-[19px]"><Caret cls="text-[#4b4f52]" /></span>
      <button aria-label="展开" className="absolute -right-1 top-[11px] flex h-8 w-6 items-center justify-center rounded-l-full bg-[#3f81f0]">
        <svg width="7" height="12" fill="none" stroke="#fff" strokeWidth="2" className="ml-1.5"><path d="M6 1L1.4 6L6 11" /></svg>
      </button>
    </section>
  );
}

/* ------------------------------- taskbar ------------------------------- */

const apps: Record<string, React.ReactNode> = {
  task: <g stroke="none"><path d="M0 8H18V24H0Z" fill="#222" /><path d="M6 1H24V16H6Z" fill="#f7f8fa" /><path d="M6 8H18V16H6Z" fill="#a9adb3" /></g>,
  edge: <g stroke="none"><defs><linearGradient id="eg" x1="0" y1="0" x2="1" y2=".4"><stop stopColor="#1c7fd0" /><stop offset=".5" stopColor="#28b6c6" /><stop offset="1" stopColor="#6bd75a" /></linearGradient></defs><path d="M12 0C19 0 24 5 24 11C24 15 21 17 17 17C14 17 14 15 15 13C15.5 9 12 7 9 8C5 9 5 15 7 19C3 18 0 14 0 11C1 4 6 0 12 0Z" fill="url(#eg)" /><path d="M0 11C2 5 9 5 12 8C8 8 7 12 8 15C9 19 12 22 16 22C8 26 0 20 0 11Z" fill="#1565b8" /><rect x="6" y="14.6" width="18" height="9.4" rx="2" fill="#8fe000" /><text x="8" y="22.4" fontSize="8" fontWeight="700" fill="#111" fontFamily="Roboto">DEV</text></g>,
  term: <g stroke="none"><rect y="2" width="24" height="20" rx="1.6" fill="#33363a" /><path d="M0 3.6Q0 2 1.6 2H22.4Q24 2 24 3.6V5.4H0Z" fill="#74787c" /><path d="M3.6 9L8 13L3.6 17M11 17.4H18" stroke="#fff" strokeWidth="2" fill="none" /></g>,
  files: <g stroke="none"><path d="M0 2Q0 1 1 1H8L10.4 3.6H23V10H0Z" fill="#d99b14" /><path d="M0 6H9L11 3.8H23Q24 3.8 24 5V21Q24 22.4 22.6 22.4H1.4Q0 22.4 0 21Z" fill="#fcc93a" /><path d="M4 22.4V17Q4 15 6 15H18Q20 15 20 17V22.4Z" fill="#1b80cf" /></g>,
  store: <g stroke="none"><path d="M7 6V2.4Q7 1 8.4 1H15.6Q17 1 17 2.4V6" stroke="#2bb7e8" strokeWidth="2" fill="none" /><path d="M1 5.4H23V20Q23 23 20 23H4Q1 23 1 20Z" fill="#1b4a80" /><path d="M7.4 9.4H11.4V13.4H7.4Z" fill="#f04e28" /><path d="M12.6 9.4H16.6V13.4H12.6Z" fill="#7fba00" /><path d="M7.4 14.6H11.4V18.6H7.4Z" fill="#1ba8ee" /><path d="M12.6 14.6H16.6V18.6H12.6Z" fill="#ffb900" /></g>,
  todesk: <g stroke="none"><rect width="24" height="24" rx="5" fill="#fff" /><path d="M9 5H21L19 16Q18.6 18 16.4 18H14.4L16 9.6H8Z" fill="#14d0d4" /><path d="M4 8H14L12 19H7.6L9 12.4H3.4Z" fill="#1567f0" /></g>,
  comsol: <g transform="scale(1.4) translate(.6 .6)"><Comsol /></g>,
};

function Taskbar() {
  return (
    <footer className="grid h-12 shrink-0 grid-cols-[1fr_auto_1fr] items-center border-t border-[#c9d2de] bg-linear-to-r from-[#dbe9f6] via-[#d5def2] to-[#dfeaf7]">
      <div />
      <div className="ml-2.5 flex items-center">
        <button aria-label="开始" className="mr-3 w-[26px]">
          <svg width="24" height="24" className="block"><path d="M0 0H11.4V11.4H0ZM12.6 0H24V11.4H12.6ZM0 12.6H11.4V24H0ZM12.6 12.6H24V24H12.6Z" fill="#1c8fdc" /></svg>
        </button>
        <button className="mr-1 flex h-[30px] w-[99px] items-center justify-center gap-1 rounded-full bg-[#f2f6fb]">
          <svg width="14" height="14" fill="none" stroke="#222" strokeWidth="1.4"><circle cx="8" cy="5.6" r="4.6" /><path d="M4.6 9L.6 13.4" /></svg>
          搜索
        </button>
        {Object.keys(apps).map((k) => (
          <button key={k} aria-label={k} className={`relative mx-[3px] flex h-[38px] w-[38px] items-center justify-center rounded-sm ${k === "comsol" ? "bg-[#eef3fa]" : ""}`}>
            <Svg s={24} v={24}>{apps[k]}</Svg>
            {(k === "files" || k === "todesk") && <span className="absolute -bottom-px h-[3px] w-1.5 rounded-full bg-gray-500" />}
            {k === "comsol" && <span className="absolute bottom-0 h-[3px] w-4 rounded-full bg-[#1970c0]" />}
          </button>
        ))}
      </div>
      <div className="flex items-center justify-end pr-4 text-[#1a1a1a]">
        <svg width="11" height="7" fill="none" stroke="#222" strokeWidth="1.3" className="mr-2.5"><path d="M.6 6.2L5.5 1.2L10.4 6.2" /></svg>
        <svg width="17" height="12" className="mr-2"><path d="M4 11.4C0 11.4 0 6 3.4 5.6C4 1 11 0 12 4.4C17 4.6 17.4 11.4 13 11.4Z" fill="#8f9194" stroke="#333" /></svg>
        <svg width="17" height="17" fill="none" stroke="#222" strokeWidth="1.4" className="mr-2.5"><path d="M2 7A6.4 6.4 0 0 1 13.6 4.4M14 .8V4.8H10M2 10.4V15.6M2 11.4H6M2 11L6 15" /><circle cx="12" cy="12" r="4" fill="#1a72c8" stroke="none" /></svg>
        <span className="mr-4 text-[15px]">英</span>
        <svg width="17" height="14" fill="none" stroke="#222" strokeWidth="1.2" className="mr-2"><path d="M1 5.4C5 1 12 1 16 5.4M3.4 8C6 5 11 5 13.6 8M5.6 10.4C7 8.8 10 8.8 11.4 10.4" /><circle cx="8.5" cy="12.2" r="1.2" fill="#222" stroke="none" /></svg>
        <svg width="17" height="14" fill="none" stroke="#222" strokeWidth="1.2" className="mr-[18px]"><path d="M1 5H3.6L7 2V12L3.6 9H1ZM9.4 5C10.4 6 10.4 8 9.4 9M11.6 3.4C13.6 5.4 13.6 8.6 11.6 10.6M13.8 1.6C17 4.6 17 9.4 13.8 12.4" /></svg>
        <div className="text-right text-[11px] leading-4"><div>16:20</div><div>2023/7/8</div></div>
      </div>
    </footer>
  );
}

export default function App() {
  return (
    <div className="flex h-screen flex-col overflow-hidden bg-[#fafcfe] font-['Noto_Sans','Noto_Sans_CJK_SC',sans-serif] text-xs text-black">
      <TitleBar />
      <Ribbon />
      <main className="grid min-h-0 flex-1 grid-cols-[419fr_533fr_952fr] gap-x-[5px] px-[3px] pt-[5px]">
        <ModelTree />
        <Settings />
        <div className="flex min-h-0 min-w-0 flex-col">
          <Graphics />
          <Messages />
        </div>
      </main>
      <div className="flex h-[33px] shrink-0 items-center justify-center pt-2">
        <span className="pl-[662px]">1.41 GB | 2.01 GB</span>
      </div>
      <Taskbar />
    </div>
  );
}
